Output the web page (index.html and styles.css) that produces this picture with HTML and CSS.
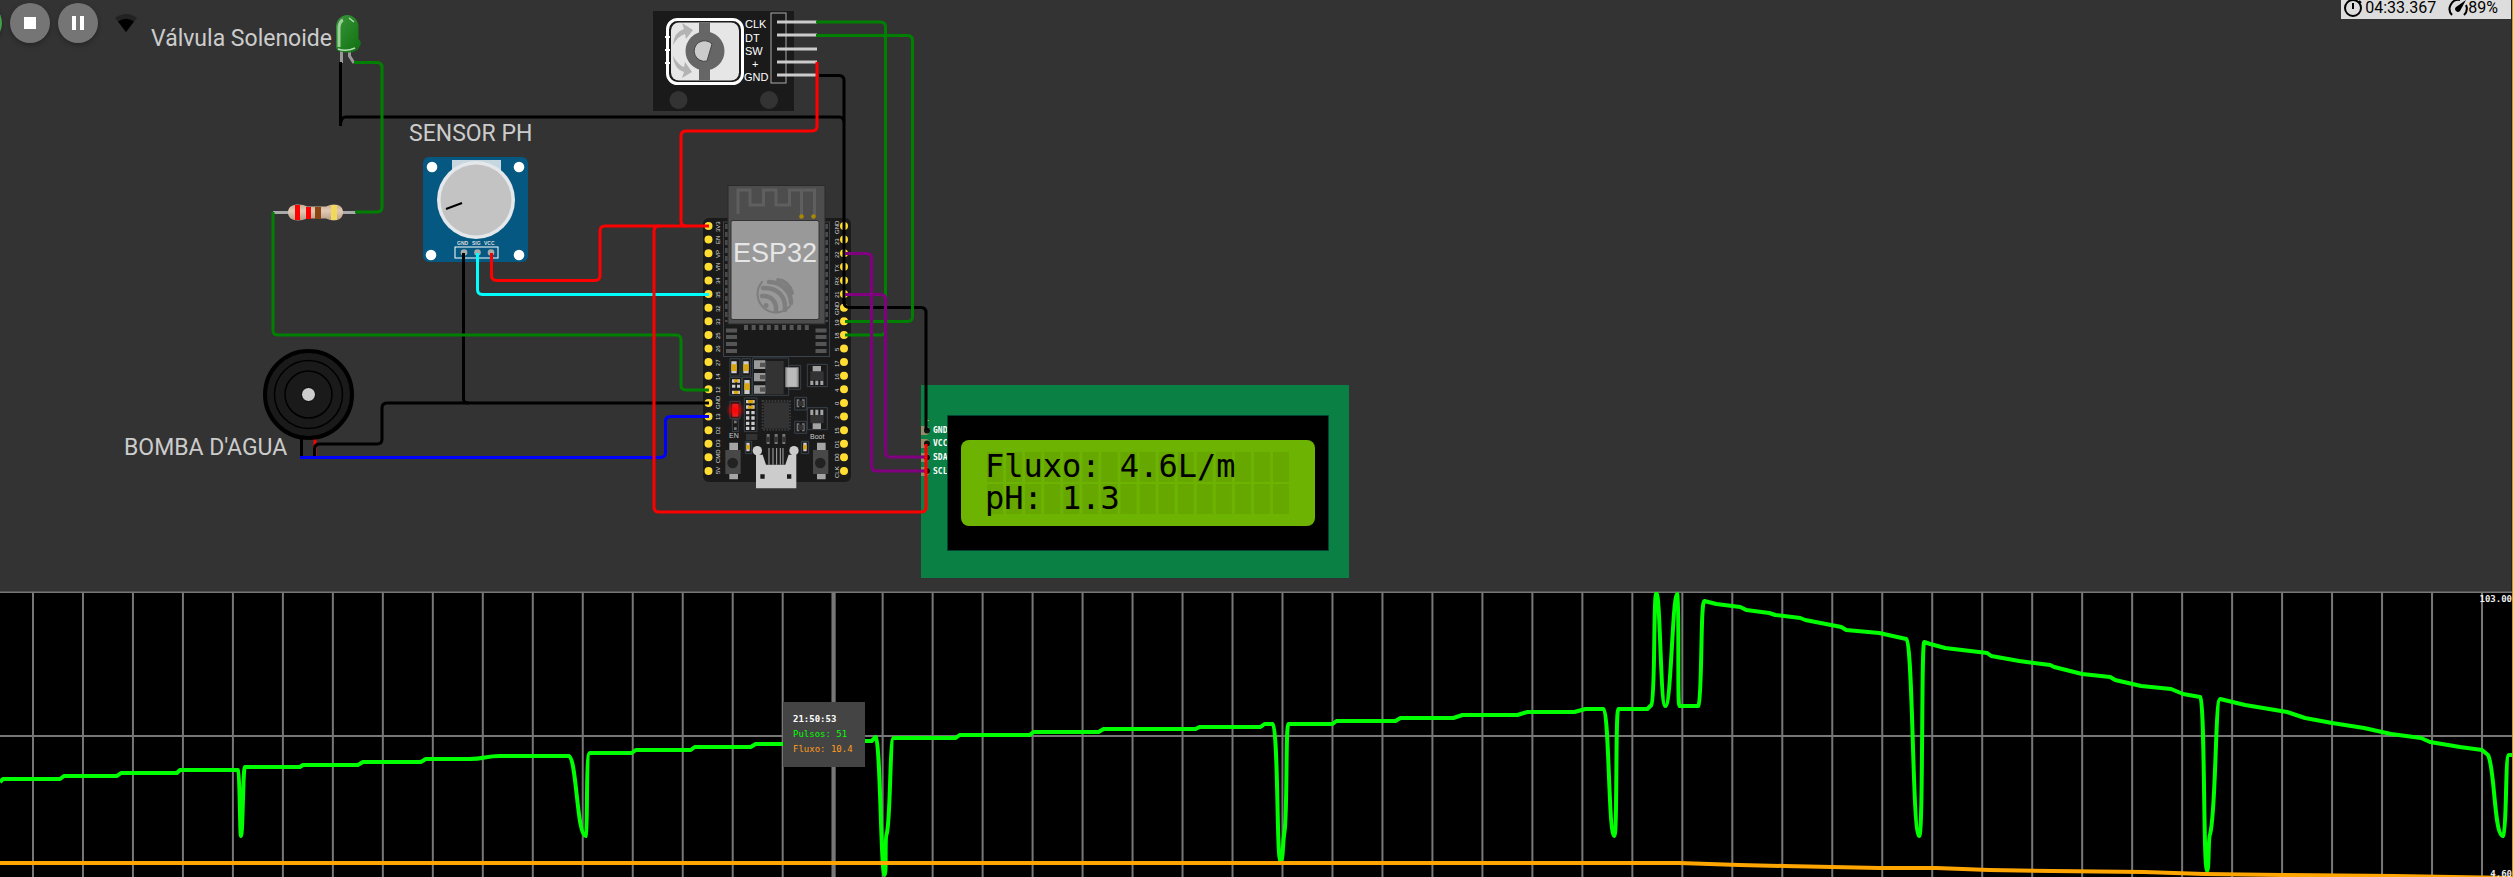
FILE: index.html
```html
<!DOCTYPE html>
<html lang="pt-BR">
<head>
<meta charset="utf-8">
<title>Simulação ESP32</title>
<link rel="stylesheet" href="styles.css">
</head>
<body>
<main class="simulator">
  <section class="stage" aria-label="Circuito">
    <svg class="circuit" aria-hidden="false">
      <defs>
        <pattern id="lcd-cells" x="987" y="452" width="19.07" height="32" patternUnits="userSpaceOnUse">
          <rect width="16" height="30" fill="#66a700"/>
        </pattern>
        <radialGradient id="power-led"><stop offset="0" stop-color="#f00"/><stop offset=".45" stop-color="#f00" stop-opacity=".6"/><stop offset="1" stop-color="#f00" stop-opacity="0"/></radialGradient>
        <linearGradient id="led-body" x1="0" y1="0" x2="1" y2="1"><stop offset="0" stop-color="#3a953a"/><stop offset=".6" stop-color="#1f7f1f"/><stop offset="1" stop-color="#126c12"/></linearGradient>
        <linearGradient id="resistor-body" x1="0" y1="0" x2="0" y2="1"><stop offset="0" stop-color="#c9ad96"/><stop offset=".4" stop-color="#e2cbb5"/><stop offset="1" stop-color="#b59c87"/></linearGradient>
      </defs>

      <!-- LED -->
      <g>
        <path d="M341.500 50v13M349.500 50v6l4.500 7" fill="none" stroke="#999" stroke-width="3"/>
        <path d="M336 27a11.250 12 0 0 1 22.500 0v12q3 2 2 6l-3 5q-9 5-19 1q-3-2-2.500-6z" fill="url(#led-body)"/>
        <path d="M339 47v-20q1-6 4-7" fill="none" stroke="#9fcf9f" stroke-width="3"/>
        <path d="M349 18l5 4M338 49q8 3 17-1" fill="none" stroke="#b5dcb5" stroke-width="1.500"/>
      </g>

      <!-- Resistor -->
      <path d="M273 212.500H356" stroke="#aaa" stroke-width="3"/>
      <path d="M288 212.500c0-6 5-8 10-8q6 0 9 2h19q4-2 8-2c6 0 9 3 9 8s-4 8-9 8q-4 0-8-2h-19q-4 2-9 2c-6 0-10-3-10-8z" fill="url(#resistor-body)"/>
      <path d="M295 205h5v15h-5zM306 207h5v12h-5z" fill="red"/>
      <path d="M315 207h6v12h-6z" fill="#8b4513"/><path d="M331 205h6v15h-6z" fill="#f1d95c"/>

      <!-- Potentiometer -->
      <rect x="423" y="157" width="105" height="105" rx="6" fill="#045881"/>
      <rect x="452" y="160" width="49" height="30" fill="#c6d7e0"/>
      <circle cx="476" cy="200" r="39" fill="#e4e8eb"/><circle cx="476" cy="200" r="35.500" fill="#c3c3c3"/>
      <path d="M446 209l16-6" stroke="#000" stroke-width="2"/>
      <g fill="#fff"><circle cx="432" cy="167" r="5.300"/><circle cx="519" cy="167" r="5.300"/><circle cx="431" cy="255" r="5.300"/><circle cx="519" cy="255" r="5.300"/></g>
      <rect x="455" y="247" width="43" height="11" fill="none" stroke="#fff"/>
      <g fill="#aaa"><circle cx="464" cy="252.500" r="3.300"/><circle cx="477.500" cy="252.500" r="3.300"/><circle cx="491" cy="252.500" r="3.300"/></g>
      <g class="pin-label pin-label-tiny"><text x="457" y="245">GND</text><text x="472" y="245">SIG</text><text x="484" y="245">VCC</text></g>

      <!-- Buzzer -->
      <path d="M301.500 435v22" stroke="#000" stroke-width="3"/><path d="M315 435v22" stroke="red" stroke-width="3"/>
      <circle cx="308.500" cy="394.500" r="43.500" fill="#1a1a1a" stroke="#000" stroke-width="4"/>
      <circle cx="308.500" cy="394.500" r="34" fill="none" stroke="#000" stroke-width="1.500"/>
      <circle cx="308.500" cy="394.500" r="23.500" fill="none" stroke="#000" stroke-width="1.500"/>
      <circle cx="308.500" cy="394.500" r="7" fill="#ccc" stroke="#000"/>

      <!-- Rotary encoder -->
      <rect x="653" y="11" width="141" height="100" fill="#1a1a1a"/>
      <g fill="#333"><circle cx="678.500" cy="100" r="9"/><circle cx="769" cy="100" r="9"/></g>
      <rect x="667.500" y="19.500" width="75" height="64" rx="10" fill="#1a1a1a" stroke="#fff" stroke-width="3"/>
      <rect x="671" y="22.500" width="68" height="58" rx="8" fill="#e6e6e6"/>
      <path d="M665 37h5M665 50h5M665 63h5" stroke="#fff" stroke-width="2"/>
      <path d="M699 22.500h11v58h-11z" fill="#666"/><circle cx="705" cy="51" r="19.500" fill="#666"/>
      <path d="M712 44l-5 17a10.300 10.300 0 1 1 5-17z" fill="#ccc" stroke="#444"/>
      <path d="M673 45q1-13 11-16l-2-6 11 7-7 9-1-5q-7 2-12 11zM673 56q1 13 11 16l-2 6 10-6-7-10-1 5q-6-2-11-11z" fill="#b3b3b3"/>
      <rect x="771" y="13" width="15" height="70" fill="none" stroke="#aaa"/>
      <path d="M777 22h40M777 35h40M777 49h40M777 62h40M777 75h40" stroke="#ccc" stroke-width="3"/>
      <g class="encoder-label"><text x="745" y="28">CLK</text><text x="745" y="42">DT</text><text x="745" y="55">SW</text><text x="752" y="68">+</text><text x="744" y="81">GND</text></g>

      <!-- ESP32 development board -->
      <rect x="703" y="218" width="148" height="264" rx="6" fill="#1a1a1a"/>
      <g stroke="#fd3" stroke-width="8" stroke-linecap="round" stroke-dasharray="0 13.610" fill="none">
        <path d="M708.500 226v246"/><path d="M844 226v246"/>
      </g>
      <g class="pin-label pin-label-side">
        <text transform="translate(720 232) rotate(-90)">3V3</text><text transform="translate(720 244) rotate(-90)">EN</text><text transform="translate(720 258) rotate(-90)">VP</text><text transform="translate(720 271) rotate(-90)">VN</text><text transform="translate(720 284) rotate(-90)">34</text><text transform="translate(720 298) rotate(-90)">35</text><text transform="translate(720 312) rotate(-90)">32</text><text transform="translate(720 325) rotate(-90)">33</text><text transform="translate(720 339) rotate(-90)">25</text><text transform="translate(720 352) rotate(-90)">26</text><text transform="translate(720 366) rotate(-90)">27</text><text transform="translate(720 380) rotate(-90)">14</text><text transform="translate(720 393) rotate(-90)">12</text><text transform="translate(720 409) rotate(-90)">GND</text><text transform="translate(720 420) rotate(-90)">13</text><text transform="translate(720 434) rotate(-90)">D2</text><text transform="translate(720 447) rotate(-90)">D3</text><text transform="translate(720 463) rotate(-90)">CMD</text><text transform="translate(720 474) rotate(-90)">5V</text>
        <text transform="translate(839 234) rotate(-90)">GND</text><text transform="translate(839 245) rotate(-90)">23</text><text transform="translate(839 258) rotate(-90)">22</text><text transform="translate(839 272) rotate(-90)">TX</text><text transform="translate(839 285) rotate(-90)">RX</text><text transform="translate(839 298) rotate(-90)">21</text><text transform="translate(839 315) rotate(-90)">GND</text><text transform="translate(839 326) rotate(-90)">19</text><text transform="translate(839 339) rotate(-90)">18</text><text transform="translate(839 351) rotate(-90)">5</text><text transform="translate(839 367) rotate(-90)">17</text><text transform="translate(839 380) rotate(-90)">16</text><text transform="translate(839 392) rotate(-90)">4</text><text transform="translate(839 405) rotate(-90)">0</text><text transform="translate(839 419) rotate(-90)">2</text><text transform="translate(839 434) rotate(-90)">15</text><text transform="translate(839 448) rotate(-90)">D1</text><text transform="translate(839 461) rotate(-90)">D0</text><text transform="translate(839 478) rotate(-90)">CLK</text>
      </g>
      <rect x="723.500" y="222" width="106" height="134.500" fill="none" stroke="#3a434b"/>
      <path d="M726.500 224v98M826.500 224v98" stroke="#4a4a4a" stroke-width="3" stroke-dasharray="5 3"/>
      <rect x="728" y="185.500" width="97" height="138.500" fill="#4d4d4d" stroke="#2a2a2a"/>
      <path d="M738 214v-24h12v15h13.500v-15H776v15h13.500v-15h25v26M801.500 190v26" fill="none" stroke="#5f5f5f" stroke-width="3"/>
      <g fill="#aa8800"><circle cx="801.500" cy="216.500" r="2.300"/><circle cx="813.500" cy="216.500" r="2.300"/></g>
      <rect x="731" y="220.500" width="88" height="99" rx="2" fill="#999" stroke="#333"/>
      <text class="chip-name" x="733" y="262">ESP32</text>
      <g fill="none" stroke="#7e7e7e" stroke-linecap="round">
        <path d="M762 282a18 18 0 1 0 28 24" stroke-width="2"/>
        <path d="M769 282c12 0 22 9 22 21M763 288c14-1 23 8 22 22M762 296c9-1 15 6 14 15" stroke-width="4.500"/>
        <path d="M778 280q10 1 14 13" stroke-width="4"/>
        <circle cx="766" cy="305.500" r="2.500" fill="#7e7e7e" stroke="none"/>
      </g>
      <path d="M744 327.500h67" stroke="#555" stroke-width="5" stroke-dasharray="4 3.600"/>
      <path d="M726 330.500h11M726 337h11M726 344h11M726 351h11M815.500 330.500h11M815.500 337h11M815.500 344h11M815.500 351h11" stroke="#555" stroke-width="4"/>

      <g transform="translate(680 330) scale(.3333)">
        <g fill="none" stroke="#39424a" stroke-width="3">
          <path d="M150 86h30v52h-30zM186 86h26v52h-26zM149 142h36v54h-36zM188 142h28v54h-28zM218 84h108v112H218zM326 106h36v72h-36zM382 103h60v67h-60zM382 233h60v66h-60zM150 214h30v52h-30zM193 204h38v101h-38zM344 202h36v38h-36zM344 274h36v36h-36zM196 334h19v37h-19zM364 334h22v37h-22zM157 269h18v36h-18z"/>
        </g>
        <path d="M256 93h55v100h-55z" fill="#333"/><path d="M222 91h34v26h-34zM222 129h34v25h-34zM222 166h34v25h-34zM316 112h40v60h-40z" fill="#999"/><path d="M322 114h28v56h-28z" fill="#bbb"/><path d="M240 98h16v13h-16zM240 135h16v13h-16zM240 172h16v13h-16z" fill="#555"/>
        <g fill="#ccc"><path d="M154 94h16v36h-16zM190 94h16v36h-16zM193 150h16v42h-16zM156 148h10v10h-10zM171 148h9v10h-9zM156 164h10v9h-10zM171 164h9v9h-9zM156 182h24v10h-24z"/>
        <path d="M198 210h10v10h-10zM214 210h10v10h-10zM198 226h10v10h-10zM214 226h10v10h-10zM198 243h10v10h-10zM214 243h10v10h-10zM198 259h10v10h-10zM214 259h10v10h-10zM198 275h10v10h-10zM214 275h10v10h-10zM198 290h10v10h-10zM214 290h10v10h-10zM199 338h10v26h-10zM370 338h10v26h-10z"/></g>
        <path d="M154 103h16v20h-16zM190 103h16v20h-16zM193 160h16v20h-16zM162 148h13v9h-13zM162 183h13v9h-13zM204 210h16v10h-16zM204 227h16v9h-16zM199 345h10v13h-10zM370 345h10v13h-10z" fill="#daa50c"/>
        <path d="M391 124h40v27h-40zM391 255h40v24h-40z" fill="#333"/><path d="M398 108h25v16h-25zM398 280h25v17h-25zM391 152h9v13h-9zM406 152h9v13h-9zM421 152h9v13h-9zM391 239h9v16h-9zM406 239h9v16h-9zM421 239h9v16h-9z" fill="#a3a3a3"/>
        <path d="M248 213h82v86h-82z" fill="none" stroke="#3c3c3c" stroke-width="6" stroke-dasharray="5 4"/><path d="M252 217h75v79h-75z" fill="#333"/>
        <path d="M350 208h8v24h-8zM366 208h8v24h-8zM350 280h8v24h-8zM366 280h8v24h-8zM260 312h9v30h-9zM284 312h9v30h-9zM307 312h9v30h-9zM162 272h8v8h-8zM162 292h8v8h-8z" fill="#777"/>
        <path d="M354 212h17v16h-17zM354 284h17v16h-17zM260 320h9v16h-9zM284 320h9v16h-9zM307 320h9v16h-9zM198 312h34v18h-34z" fill="#333"/>
        <path d="M157 222h18v38h-18z" fill="#d33"/><circle cx="166" cy="240" r="28" fill="url(#power-led)"/>
        <path d="M148 338h26v110h-26zM411 338h26v110h-26z" fill="#a5a5a5"/><path d="M136 360h46v72h-46zM399 360h46v72h-46z" fill="#484848"/><circle cx="158" cy="399" r="16" fill="#222"/><circle cx="421" cy="399" r="16" fill="#222"/>
        <path d="M267 354v50M279 354v50M290 354v50M301 354v50M309 354v50" stroke="#aaa" stroke-width="3"/>
        <path d="M228 374h20l10 30h58l10-30h23v101H228z" fill="#ccc"/><circle cx="232" cy="362" r="14" fill="#ccc"/><circle cx="342" cy="362" r="14" fill="#ccc"/><path d="M241 433h13v13h-13zM321 433h13v13h-13z" fill="#1a1a1a"/>
      </g>
      <g class="board-label"><text x="729" y="438">EN</text><text x="810" y="439">Boot</text></g>

      <!-- LCD -->
      <path d="M921 385h428v193H921z" fill="#0a8044"/>
      <path d="M921 426h6a5 5 0 0 1 0 9h-6zM921 439h6a5 5 0 0 1 0 9h-6zM921 453h6a5 5 0 0 1 0 9h-6zM921 467h6a5 5 0 0 1 0 9h-6z" fill="#918e67"/>
      <g fill="#111"><circle cx="927" cy="430.500" r="3"/><circle cx="927" cy="443.500" r="3"/><circle cx="927" cy="457.500" r="3"/><circle cx="927" cy="471" r="3"/></g>
      <path d="M926 420.500h3" stroke="#d4a017"/>
      <g class="pin-label pin-label-lcd"><text x="933" y="433">GND</text><text x="933" y="446">VCC</text><text x="933" y="460">SDA</text><text x="933" y="474">SCL</text></g>
      <path d="M947.500 415.500h381v135h-381z" stroke="#043"/>
      <rect x="961" y="440" width="354" height="86" rx="8" fill="#6db302"/>
      <rect x="987" y="452" width="302" height="62" fill="url(#lcd-cells)"/>
      <g class="lcd-text"><text x="985" y="477">Fluxo: 4.6L/m</text><text x="985" y="509">pH: 1.3</text></g>

      <!-- Wires -->
      <g class="wires">
        <g stroke="#000">
          <path d="M340.500 62v64q0-9 5-9H839q5 0 5 5"/>
          <path d="M463.500 253v146q0 4 5 4"/>
          <path d="M314.500 457v-8q0-5 5-5H377q5 0 5-5v-31q0-5 5-5H709"/>
          <path d="M819 75.500h20q5 0 5 5V302q0 5 5 5.500h72q5 0 5 5V430"/>
        </g>
        <g stroke="green">
          <path d="M354 62.500h23q5 0 5 5V207q0 5-5 5H355"/>
          <path d="M273 212V330q0 5 5 5H676q5 0 5 5v45q0 5 5 5h23"/>
          <path d="M816 22h64.500q5 0 5 5V330q0 5-5 5H845"/>
          <path d="M816 35.500h91.500q5 0 5 5v276q0 5-5 5H845"/>
        </g>
        <g stroke="red">
          <path d="M491.500 253v22.500q0 5 5 5H595q5 0 5-5V231q0-5 5-5H709"/>
          <path d="M817 62v64q0 5-5 5H686q-5 0-5 5v85q0 5 5 5"/>
        </g>
        <path stroke="cyan" d="M477.500 253v36.500q0 5 5 5H709"/>
        <path stroke="blue" d="M300 457.500H660q5.500 0 5.500-5V421.500q0-5 5-5H709"/>
        <g stroke="purple"><path d="M845 253.500h21.500q5 0 5 5V466q0 5 5 5H925"/><path d="M845 294.500h35.500q5 0 5 5V452q0 5 5 5H925"/></g>
        <path stroke="red" d="M659 226q-5 0-5 5V507q0 5 5 5H921q5 0 5-5V444"/>
      </g>
      <g class="part-label"><text x="151" y="46">Válvula Solenoide</text><text x="409" y="141">SENSOR PH</text><text x="124" y="455">BOMBA D'AGUA</text></g>
    </svg>

    <div class="toolbar">
      <button class="tool tool-restart" type="button" aria-label="Reiniciar"></button>
      <button class="tool" type="button" aria-label="Parar"><svg width="12" height="12"><path d="M0 0h12v12H0z" fill="#fff"/></svg></button>
      <button class="tool" type="button" aria-label="Pausar"><svg width="12" height="14"><path d="M0 0h4v14H0zM8 0h4v14H8z" fill="#fff"/></svg></button>
      <svg class="wifi" width="24" height="18" viewBox="0 0 24 18"><path d="M12 18L1 4Q12-4 23 4z" fill="#222"/><path d="M12 18L4 7.500Q12 2 20 7.500z" fill="#000"/></svg>
    </div>

    <div class="status">
      <svg width="20" height="18" viewBox="0 0 20 18"><circle cx="10" cy="8" r="8" fill="none" stroke="#000" stroke-width="2"/><path d="M10 3v6M16 1l2 2" stroke="#000" stroke-width="2"/></svg>
      <span class="status-time">04:33.367</span>
      <svg width="20" height="18" viewBox="0 0 20 18"><path d="M4 15A9 9 0 0 1 12 0M18 5A9 9 0 0 1 16 15" fill="none" stroke="#000" stroke-width="2"/><path d="M18 0L12 11a2.600 2.600 0 1 1-4-4z"/></svg>
      <span>89%</span>
    </div>
  </section>

  <section class="plotter" aria-label="Gráfico">
    <svg class="plot" viewBox="0 0 2513 285" preserveAspectRatio="none">
      <defs><pattern id="columns" x="32" width="50" height="285" patternUnits="userSpaceOnUse"><path d="M0 0h2v285H0z" fill="#777"/></pattern></defs>
      <path d="M0 0h2513v285H0z" fill="url(#columns)"/>
      <path d="M0 .5H2513" stroke="#777"/><path d="M0 144H2513" stroke="#777" stroke-width="2"/>
      <path d="M834 0V285" stroke="#777" stroke-width="4"/>
      <path class="series" stroke="#0f0" d="M0 190L3 187H60L64 184H117L121 181H177L180 178H238C240 180 240 244 241 244C243 244 243 175 245 175H300L303 173H358L363 170H421L426 167H470C485 167 485 164 500 164H569C577 166 577 244 586 244C588 242 586 161 590 161H632L636 158H691L695 155H751L756 152H815L820 149H872L876 145C881 150 881 283 885 283C887 283 885 245 887 242C891 230 890 146 894 146H956L960 143H1030L1034 140H1099L1104 137H1196L1200 135H1261L1265 132H1273C1279 136 1277 269 1281 269C1284 269 1283 250 1285 240C1288 220 1286 132 1289 132H1333L1337 129H1396L1401 126H1454L1463 123H1518L1528 120H1575L1586 117H1604C1610 120 1609 244 1615 244C1618 244 1616 117 1619 117H1648L1652 113C1656 108 1654 1 1657 1C1661 1 1661 114 1666 114C1672 114 1673 2 1678 2C1680 5 1678 114 1680 114H1699C1703 108 1701 9 1705 9L1717 12L1741 15L1747 18L1770 21L1776 23L1801 26L1806 28L1842 35L1847 38L1880 41L1907 47C1914 52 1913 244 1920 244C1924 244 1922 50 1925 50L1931 52L1946 56L1988 61L1992 64L2020 69L2051 73L2055 75L2083 82L2111 85L2116 88L2142 94L2172 97L2184 102L2201 105C2206 110 2204 279 2208 279C2210 279 2209 245 2211 242C2217 220 2216 107 2221 107L2246 113L2288 120L2306 126L2333 131L2365 136L2392 142L2422 146L2431 150L2461 155L2483 158L2489 163C2496 176 2495 244 2504 244C2508 240 2506 163 2510 163H2513"/>
      <path class="series" stroke="orange" d="M0 271H1680L1740 273L1785 274L1880 276L1937 276L1990 278L2053 279L2145 280L2205 282L2282 283L2395 284L2513 286"/>
    </svg>
    <span class="scale scale-max">103.00</span>
    <span class="scale scale-min">4.60</span>
    <div class="tooltip">
      <strong>21:50:53</strong>
      <span class="tooltip-pulsos">Pulsos: 51</span>
      <span class="tooltip-fluxo">Fluxo: 10.4</span>
    </div>
  </section>
</main>
</body>
</html>
```
FILE: styles.css
```css
* { box-sizing: border-box; }
body { margin: 0; background: #333; font-family: Roboto, sans-serif; }

.simulator {
  display: grid;
  grid-template-rows: 591fr 286fr;
  height: 100vh;
  overflow: hidden;
  border-right: 1px solid #bda800;
}

.stage { position: relative; overflow: hidden; border-right: 1px solid #222; }
.circuit { display: block; width: 100%; height: 100%; overflow: hidden; }

.wires { fill: none; stroke-width: 3; }
.part-label { font: 23px Roboto, sans-serif; fill: #ccc; }
.encoder-label { font: 11px "Liberation Sans", sans-serif; fill: #fff; }
.chip-name { font: 27px "Liberation Sans", sans-serif; fill: #e6e6e6; }
.board-label { font: 7px "Liberation Sans", sans-serif; fill: #ccc; }
.pin-label { font-family: "Liberation Sans", sans-serif; fill: #ddd; }
.pin-label-tiny { font-size: 5px; font-weight: bold; }
.pin-label-side { font-size: 6px; }
.pin-label-lcd { font: bold 8px "DejaVu Sans Mono", monospace; fill: #fff; }
.lcd-text { font: 32px "DejaVu Sans Mono", monospace; fill: #000; white-space: pre; }

.toolbar {
  position: absolute;
  top: 3px;
  left: -38px;
  display: flex;
  align-items: center;
  gap: 8px;
}
.tool {
  display: flex;
  align-items: center;
  justify-content: center;
  width: 40px;
  height: 40px;
  padding: 0;
  border: 0;
  border-radius: 50%;
  background: #757575;
  box-shadow: 0 2px 5px rgba(0, 0, 0, .3);
}
.tool-restart { background: #43a047; }
.wifi { margin-left: 8px; }

.status {
  position: absolute;
  top: 0;
  right: 0;
  display: flex;
  padding: 0 13px 4px 2px;
  background: #ddd;
  color: #000;
  font-size: 16px;
  line-height: 15px;
}
.status svg { height: 18px; margin-bottom: -4px; }
.status-time { margin: 0 12px 0 2px; }

.plotter { position: relative; overflow: hidden; border-top: 1px solid #555; background: #000; }
.plot { display: block; width: 100%; height: 100%; }
.series { fill: none; stroke-width: 4; stroke-linejoin: round; }

.scale {
  position: absolute;
  right: 0;
  color: #eee;
  font: bold 9px/10px "DejaVu Sans Mono", monospace;
}
.scale-max { top: 2px; }
.scale-min { bottom: -2px; }

.tooltip {
  position: absolute;
  top: 110px;
  left: 783px;
  display: flex;
  flex-direction: column;
  padding: 10px 12px 10px 10px;
  background: #444;
  font: 9px/15px "DejaVu Sans Mono", monospace;
}
.tooltip strong { color: #fff; }
.tooltip-pulsos { color: #0f0; }
.tooltip-fluxo { color: #ff9c1a; }
```
